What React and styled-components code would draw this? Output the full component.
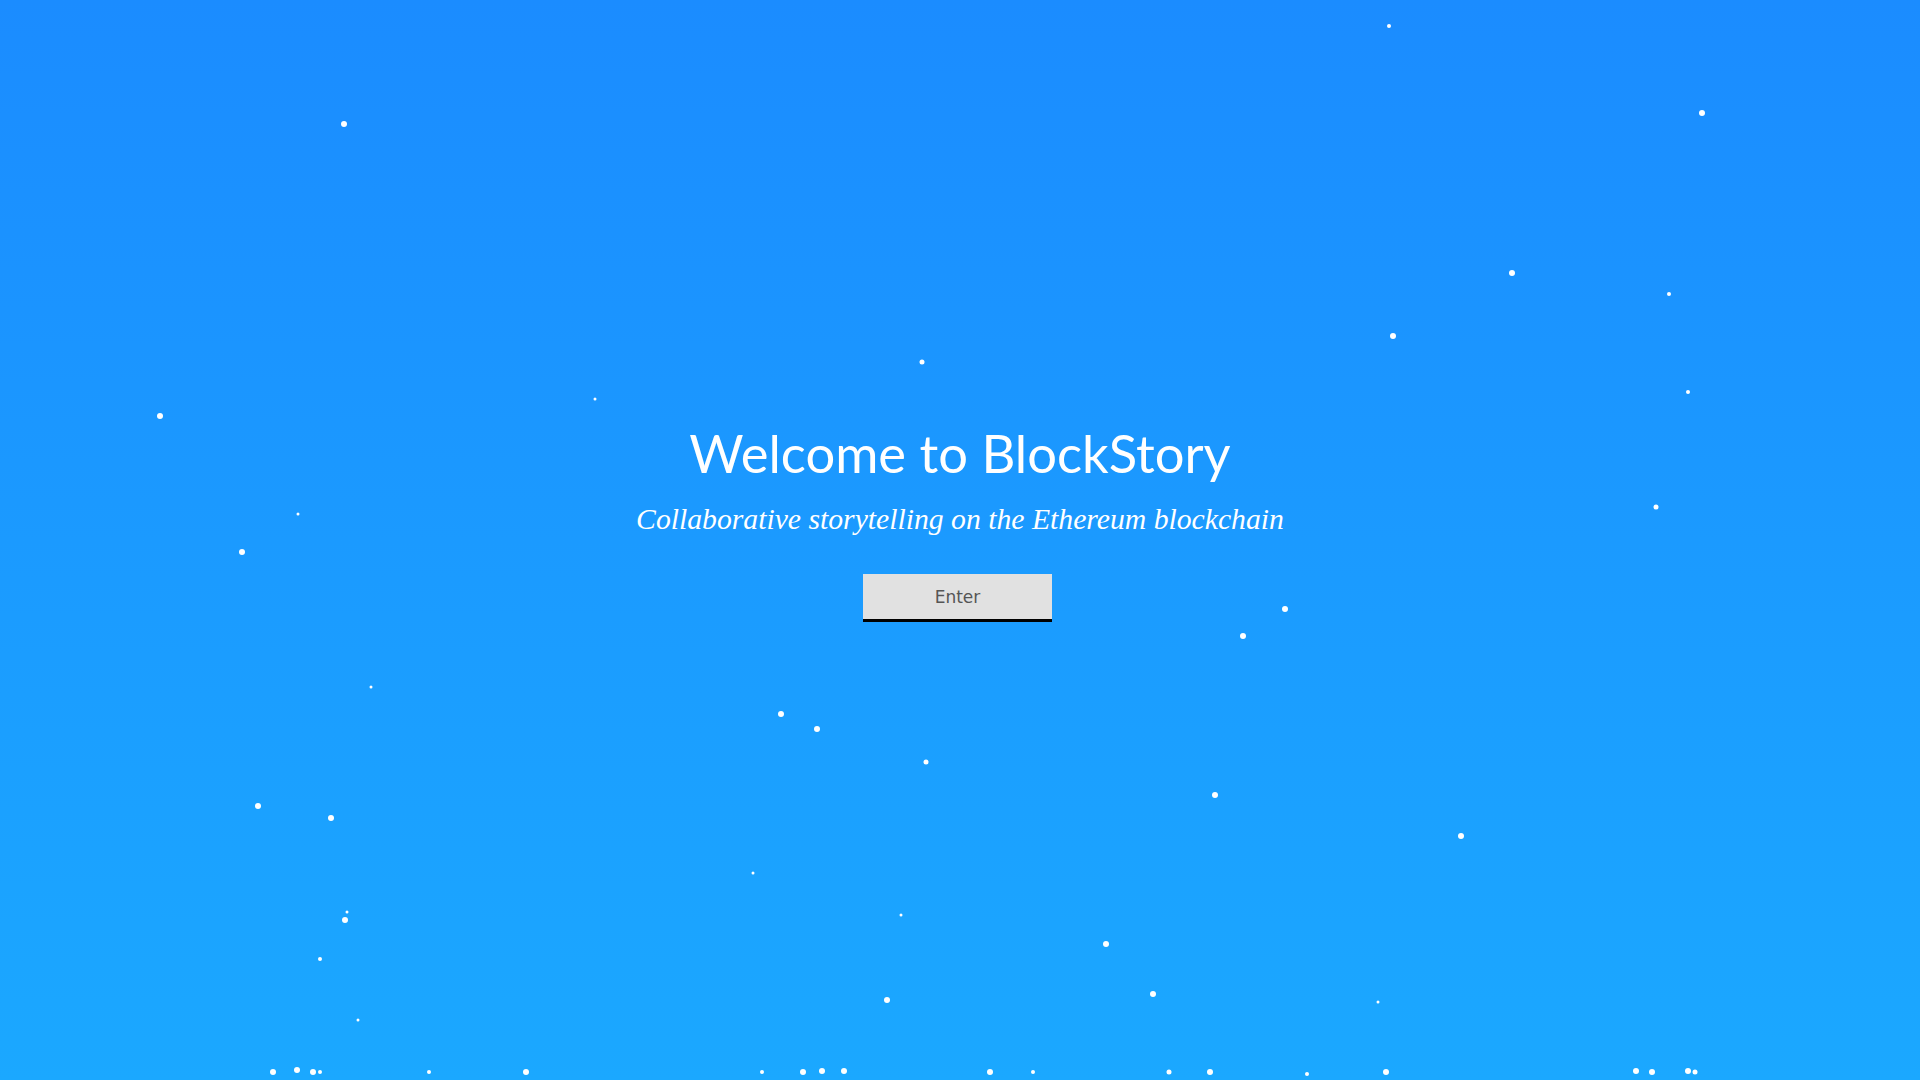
import React from "react";
import styled, { createGlobalStyle } from "styled-components";

const Global = createGlobalStyle`
  html, body { margin: 0; padding: 0; height: 100%; }
  body { font-family: "Lato", "Liberation Sans", sans-serif; }
  #root { height: 100%; }
`;

const Page = styled.main`
  position: relative;
  width: 100%;
  height: 100vh;
  overflow: hidden;
  background: linear-gradient(180deg, #1b8cff 0%, #1ba8ff 100%);
  display: flex;
  align-items: center;
  justify-content: center;
`;

const Particles = styled.svg`
  position: absolute;
  inset: 0;
  width: 100%;
  height: 100%;
  pointer-events: none;
`;

const Hero = styled.section`
  position: relative;
  display: flex;
  flex-direction: column;
  align-items: center;
  margin-top: -37px;
`;

const Title = styled.h1`
  margin: 0;
  font-family: "Lato", sans-serif;
  font-weight: 400;
  font-size: 52.5px;
  line-height: 64px;
  color: #ffffff;
  letter-spacing: 0;
`;

const Subtitle = styled.p`
  margin: 14px 0 0;
  font-family: "Liberation Serif", serif;
  font-style: italic;
  font-size: 29.7px;
  line-height: 40px;
  color: #ffffff;
`;

const EnterButton = styled.button`
  margin: 35px 5px 0 0;
  width: 189px;
  height: 48px;
  background: #e1e1e1;
  border: none;
  border-bottom: 3px solid #000;
  color: #555555;
  font-family: "DejaVu Sans", sans-serif;
  font-size: 17px;
  cursor: pointer;
  padding: 0;
`;

const dots = [
  [1389, 26, 2], [1702, 113, 3], [344, 124, 3], [1512, 273, 3], [1669, 294, 2],
  [1393, 336, 3], [1688, 392, 2], [922, 362, 2.5], [595, 399, 1.5], [160, 416, 3],
  [1656, 507, 2.5], [298, 514, 1.5], [242, 552, 3], [1285, 609, 3], [1243, 636, 3],
  [371, 687, 1.5], [781, 714, 3], [817, 729, 3], [926, 762, 2.5], [258, 806, 3],
  [331, 818, 3], [1215, 795, 3], [1461, 836, 3], [753, 873, 1.5], [347, 912, 1.5],
  [345, 920, 3], [901, 915, 1.5], [320, 959, 2], [1106, 944, 3], [1153, 994, 3],
  [887, 1000, 3], [1378, 1002, 1.5], [358, 1020, 1.5],
  [273, 1072, 3], [297, 1070, 3], [313, 1072, 3], [320, 1072, 2], [429, 1072, 2],
  [526, 1072, 3], [762, 1072, 2], [803, 1072, 3], [822, 1071, 3], [844, 1071, 3],
  [990, 1072, 3], [1033, 1072, 2], [1169, 1072, 2.5], [1210, 1072, 3], [1307, 1074, 2],
  [1386, 1072, 3], [1636, 1071, 3], [1652, 1072, 3], [1688, 1071, 3], [1695, 1072, 2.5],
];

export default function App() {
  return (
    <>
      <Global />
      <Page>
        <Particles viewBox="0 0 1920 1080" preserveAspectRatio="none">
          {dots.map(([x, y, r], i) => (
            <circle key={i} cx={x} cy={y} r={r} fill="#ffffff" />
          ))}
        </Particles>
        <Hero>
          <Title>Welcome to BlockStory</Title>
          <Subtitle>Collaborative storytelling on the Ethereum blockchain</Subtitle>
          <EnterButton>Enter</EnterButton>
        </Hero>
      </Page>
    </>
  );
}
